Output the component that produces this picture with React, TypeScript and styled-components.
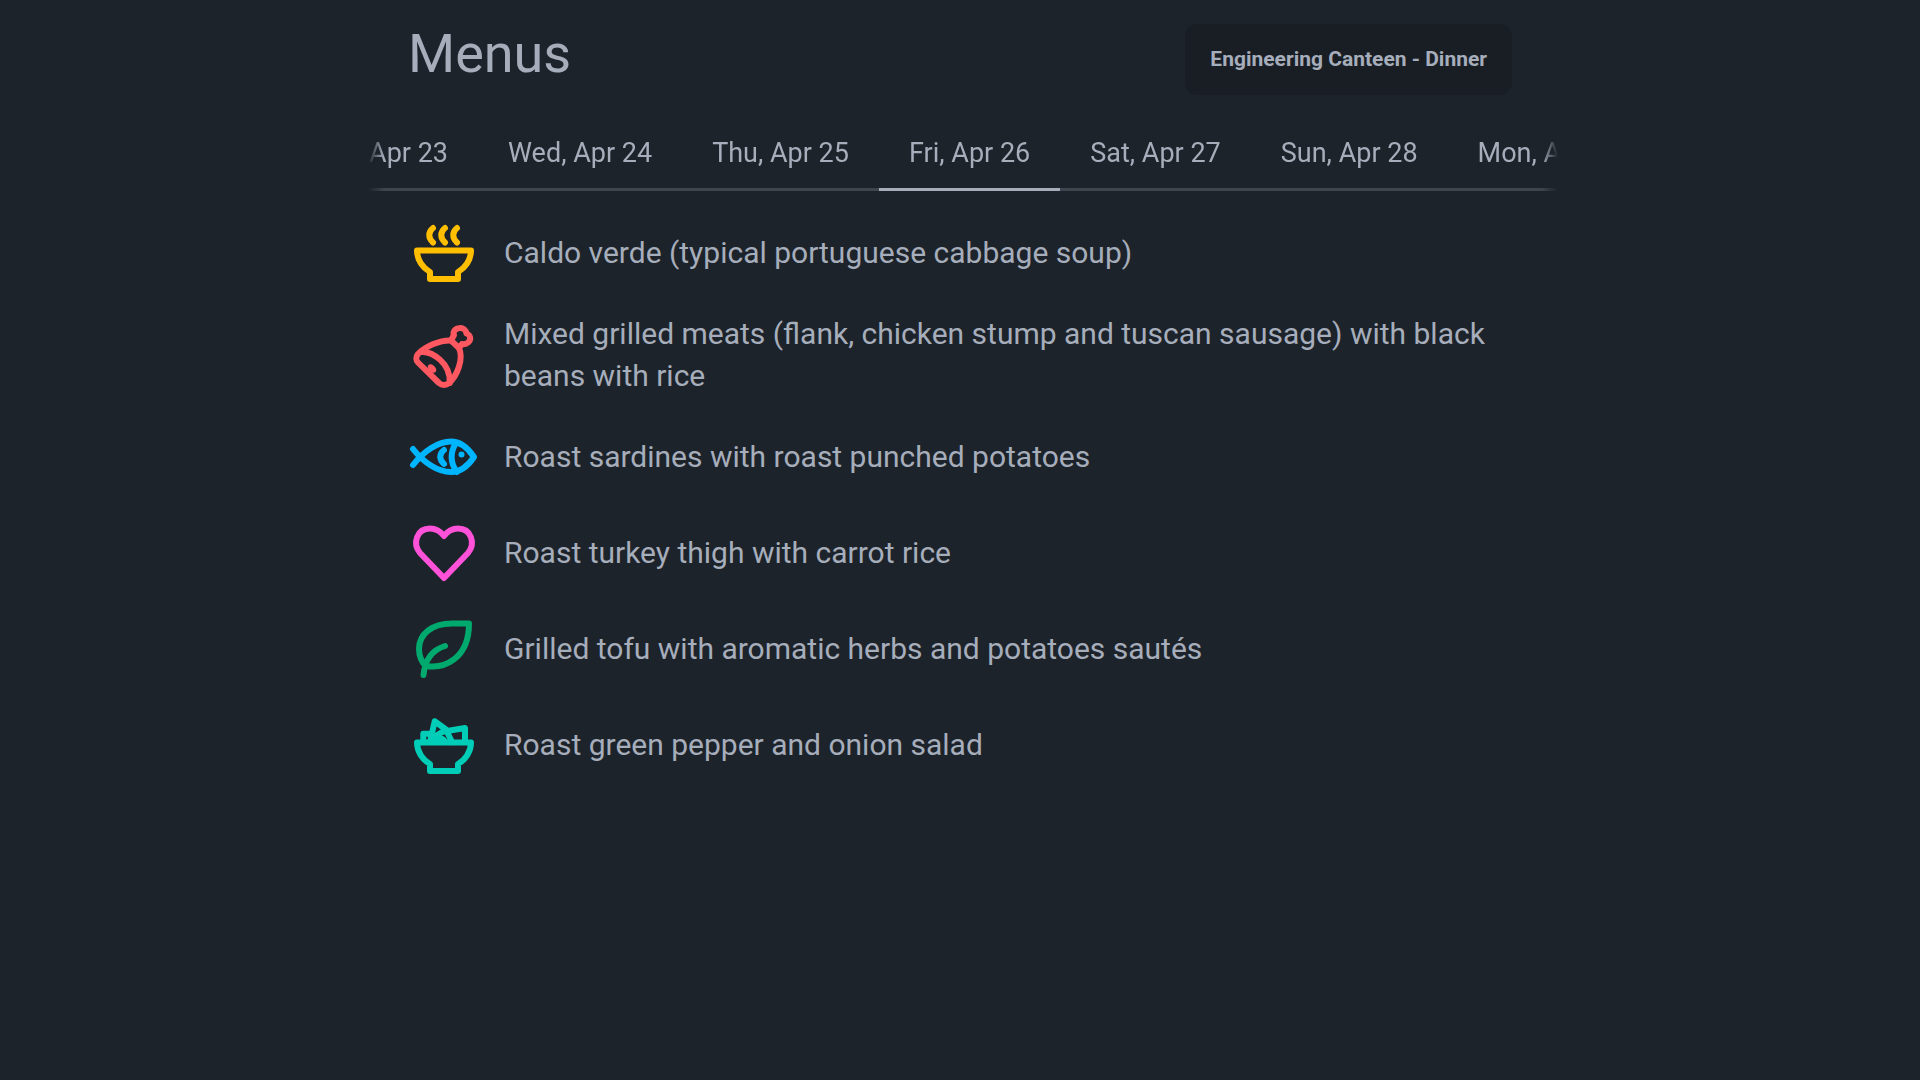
import React from "react";
import styled, { createGlobalStyle } from "styled-components";

const GlobalStyle = createGlobalStyle`
  html, body {
    margin: 0;
    height: 100%;
    background: #1d232a;
    color: #a6adbb;
    font-family: Roboto, "Liberation Sans", sans-serif;
  }
`;

const Page = styled.div`
  width: 1190px;
  margin-left: 368px;
  height: 1080px;
  overflow: hidden;
`;

const Header = styled.header`
  display: flex;
  justify-content: space-between;
  align-items: flex-start;
  height: 95px;
  padding: 24px 46px 0 40px;
`;

const Title = styled.h1`
  margin: 0;
  font-size: 54px;
  font-weight: 400;
  line-height: 60px;
`;

const CanteenButton = styled.div`
  display: flex;
  align-items: center;
  height: 71px;
  padding: 0 25px 2px;
  box-sizing: border-box;
  border-radius: 12px;
  background: #191e24;
  font-size: 21px;
  font-weight: 700;
`;

const TabsViewport = styled.nav`
  overflow: hidden;
  -webkit-mask-image: linear-gradient(to right, transparent, #000 16px, #000 calc(100% - 16px), transparent);
  mask-image: linear-gradient(to right, transparent, #000 16px, #000 calc(100% - 16px), transparent);
`;

const TabsRow = styled.div<{ $scroll: number }>`
  display: flex;
  margin-left: -${(p) => p.$scroll}px;
  width: max-content;
`;

const Tab = styled.div<{ $active?: boolean }>`
  padding: 0 30px 1px;
  height: 72px;
  display: flex;
  align-items: center;
  box-sizing: border-box;
  font-size: 27px;
  white-space: nowrap;
  border-bottom: 3px solid ${(p) => (p.$active ? "#a6adbb" : "#3f454e")};
`;

const MenuList = styled.ul`
  list-style: none;
  margin: 0;
  padding: 32px 47px 0 46px;
  display: flex;
  flex-direction: column;
  gap: 36px;
`;

const MenuRow = styled.li`
  display: flex;
  align-items: center;
  gap: 30px;
  min-height: 60px;
`;

const IconSvg = styled.svg<{ $color: string }>`
  flex: none;
  width: 60px;
  height: 60px;
  overflow: visible;
  fill: none;
  color: ${(p) => p.$color};
  stroke: currentColor;
  stroke-width: 6;
  stroke-linecap: round;
  stroke-linejoin: round;
`;

const IconDot = styled.ellipse`
  fill: currentColor;
  stroke: none;
`;

const MenuText = styled.span`
  font-size: 30px;
  line-height: 42px;
  margin: -6px 0;
`;

const Bowl = () => (
  <path d="M3 27.5H57C57 37 51 45 44 49V56H16V49C9 45 3 37 3 27.5Z" />
);

const SoupIcon = () => (
  <IconSvg viewBox="0 0 60 60" $color="#ffbe00">
    <Bowl />
    <path d="M19 5C14 9 14 15 19 19.5M31 5C26 9 26 15 31 19.5M43 5C38 9 38 15 43 19.5" />
  </IconSvg>
);

const HamIcon = () => (
  <IconSvg viewBox="0 0 60 60" $color="#ff5861">
    <path d="M37 15.5C26 15 12 21 4 29C1.5 32 2 35.5 4 37.5L25 58C28 60.5 32 60.5 35 58C43 51 50 34 45 23Z" />
    <path d="M37 15.5L40 10C38.5 7 41 3.5 45.5 3C49 2.5 52 5 52.5 8.5C54 9 55.5 10 56 12C57 16 53 20 48 19L45 23" />
    <path d="M7 27C18 26 37 38 35.7 58" />
    <IconDot cx="18" cy="43.5" rx="5" ry="3.3" transform="rotate(45 18 43.5)" />
  </IconSvg>
);

const FishIcon = () => (
  <IconSvg viewBox="0 0 60 60" $color="#00b5ff">
    <path d="M-1 38C10 24 24 14.5 37 14.5C47 14.5 54 21 60 30C54 39 47 45 37 45C24 45 10 36 -1 22" />
    <path d="M42 16C36 25 36 36 43 45M30 23C25 27 25 32 30 37" />
    <IconDot cx="47.5" cy="27.5" rx="3" ry="3" />
  </IconSvg>
);

const HeartIcon = () => (
  <IconSvg viewBox="0 0 60 60" $color="#ff52d9">
    <path d="M30 55L6 30C-2 20 3 5.5 16 5.5C23 5.5 27 9 30 13C33 9 37 5.5 44 5.5C57 5.5 62 20 54 30Z" />
  </IconSvg>
);

const LeafIcon = () => (
  <IconSvg viewBox="0 0 60 60" $color="#00a96e">
    <path d="M55 4.5H38C18 4.5 5 15 5 30C5 37 8 44 12 47C30 50 55 40 55 4.5Z" />
    <path d="M9.5 56C11 40 18 31 31 27" />
  </IconSvg>
);

const SaladIcon = () => (
  <IconSvg viewBox="0 0 60 60" $color="#00cdb7">
    <Bowl />
    <path d="M9.3 27V18.7H16M16 27L20.7 6.3L32.3 14.7L20 22M32 14.7L38 27M33 16L51 13V27M19 27C21 22 29 22 31 27" />
  </IconSvg>
);

const tabs = ["Tue, Apr 23", "Wed, Apr 24", "Thu, Apr 25", "Fri, Apr 26", "Sat, Apr 27", "Sun, Apr 28", "Mon, Apr 29"];

const menu = [
  { icon: <SoupIcon />, text: "Caldo verde (typical portuguese cabbage soup)" },
  { icon: <HamIcon />, text: "Mixed grilled meats (flank, chicken stump and tuscan sausage) with black beans with rice" },
  { icon: <FishIcon />, text: "Roast sardines with roast punched potatoes" },
  { icon: <HeartIcon />, text: "Roast turkey thigh with carrot rice" },
  { icon: <LeafIcon />, text: "Grilled tofu with aromatic herbs and potatoes sautés" },
  { icon: <SaladIcon />, text: "Roast green pepper and onion salad" },
];

export default function App() {
  return (
    <Page>
      <GlobalStyle />
      <Header>
        <Title>Menus</Title>
        <CanteenButton>Engineering Canteen - Dinner</CanteenButton>
      </Header>
      <TabsViewport>
        <TabsRow $scroll={85}>
          {tabs.map((t) => (
            <Tab key={t} $active={t === "Fri, Apr 26"}>
              {t}
            </Tab>
          ))}
        </TabsRow>
      </TabsViewport>
      <MenuList>
        {menu.map((m) => (
          <MenuRow key={m.text}>
            {m.icon}
            <MenuText>{m.text}</MenuText>
          </MenuRow>
        ))}
      </MenuList>
    </Page>
  );
}
